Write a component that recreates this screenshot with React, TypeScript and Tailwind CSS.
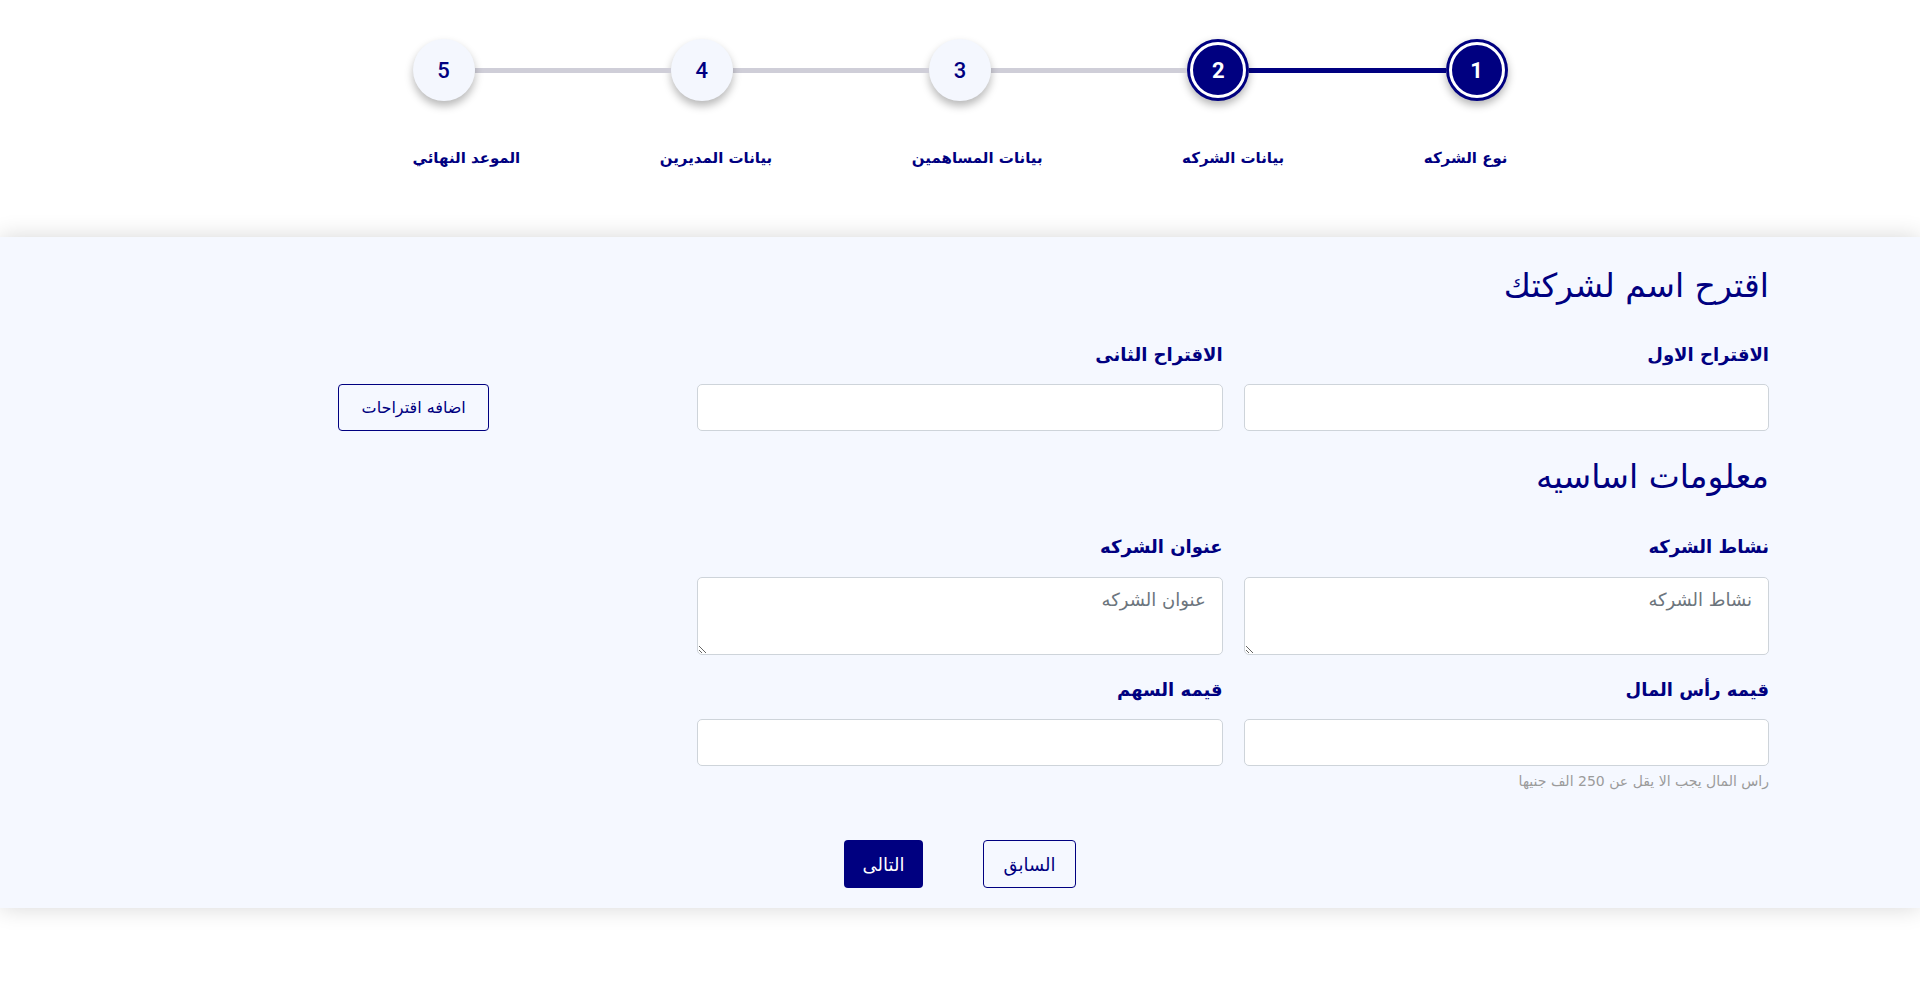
import React from "react";

const steps = [
  { n: 1, label: "نوع الشركه", done: true },
  { n: 2, label: "بيانات الشركه", done: true },
  { n: 3, label: "بيانات المساهمين", done: false },
  { n: 4, label: "بيانات المديرين", done: false },
  { n: 5, label: "الموعد النهائي", done: false },
];

function StepCircle({ n, done }: { n: number; done: boolean }) {
  if (done) {
    return (
      <div className="w-[62px] h-[62px] shrink-0 rounded-full bg-[#000080] flex items-center justify-center shadow-[0_4px_8px_rgba(0,0,0,0.3)]">
        <div className="w-[56px] h-[56px] rounded-full border-[3px] border-white bg-[#000080] flex items-center justify-center text-white text-[22px] font-bold font-['Roboto',sans-serif]">
          {n}
        </div>
      </div>
    );
  }
  return (
    <div className="w-[62px] h-[62px] shrink-0 rounded-full bg-[#f4f7fe] flex items-center justify-center text-[#000080] text-[22px] font-medium font-['Roboto',sans-serif] shadow-[0_5px_8px_rgba(0,0,0,0.28)]">
      {n}
    </div>
  );
}

function Stepper() {
  return (
    <div className="pt-[39px] pb-[67px]">
      <div className="w-[1095px] mx-auto flex items-center">
        {steps.map((s, i) => (
          <React.Fragment key={s.n}>
            <StepCircle n={s.n} done={s.done} />
            {i < steps.length - 1 && (
              <div className={`flex-1 h-[5px] ${steps[i + 1].done ? "bg-[#000080]" : "bg-[#cfced8]"}`} />
            )}
          </React.Fragment>
        ))}
      </div>
      <div className="w-[1095px] mx-auto flex justify-between mt-[45px]">
        {steps.map((s) => (
          <span key={s.n} className="text-[15px] leading-[24px] font-bold text-[#000080]">
            {s.label}
          </span>
        ))}
      </div>
    </div>
  );
}

function Field({ label, area, placeholder, help }: { label: string; area?: boolean; placeholder?: string; help?: string }) {
  return (
    <div className="flex flex-col">
      <label className="text-[18px] leading-[24px] font-bold text-[#000080]">{label}</label>
      {area ? (
        <textarea
          placeholder={placeholder}
          className="mt-[18px] h-[78px] w-full bg-white border border-[#ced4da] rounded-[5px] px-[16px] py-[8px] text-[18px] text-[#333] placeholder:text-[#6c757d] outline-none"
        />
      ) : (
        <input className="mt-[17px] h-[47px] w-full bg-white border border-[#ced4da] rounded-[5px] px-[16px] text-[18px] outline-none" />
      )}
      {help && <p className="mt-[6px] text-[14px] leading-[18px] text-[#9b9b9b]">{help}</p>}
    </div>
  );
}

export default function App() {
  return (
    <div dir="rtl" className="min-h-screen bg-white font-['DejaVu_Sans','Noto_Sans',sans-serif]">
      <Stepper />

      <section className="bg-[#f5f8ff] shadow-[0_0_22px_rgba(0,0,0,0.16)] pt-[29px] pb-[20px]">
        <div className="w-[1618px] mx-auto">
          <h2 className="text-[33px] leading-[40px] font-normal text-[#000080]">اقترح اسم لشركتك</h2>

          <div className="grid grid-cols-3 gap-x-[21px] mt-[37px]">
            <Field label="الاقتراح الاول" />
            <Field label="الاقتراح الثانى" />
            <div className="flex items-end justify-center">
              <button className="h-[47px] w-[151px] border border-[#000080] rounded-[4px] text-[#000080] text-[16px]">
                اضافه اقتراحات
              </button>
            </div>
          </div>

          <h2 className="mt-[26px] text-[33px] leading-[40px] font-normal text-[#000080]">معلومات اساسيه</h2>

          <div className="grid grid-cols-3 gap-x-[21px] mt-[38px]">
            <Field label="نشاط الشركه" area placeholder="نشاط الشركه" />
            <Field label="عنوان الشركه" area placeholder="عنوان الشركه" />
            <div />
          </div>

          <div className="grid grid-cols-3 gap-x-[21px] mt-[23px]">
            <Field label="قيمه رأس المال" help="راس المال يجب الا يقل عن 250 الف جنيها" />
            <Field label="قيمه السهم" />
            <div />
          </div>

          <div className="flex justify-center gap-[60px] mt-[50px]">
            <button className="h-[48px] w-[93px] border border-[#000080] rounded-[4px] text-[#000080] text-[18px]">
              السابق
            </button>
            <button className="h-[48px] w-[79px] bg-[#000080] rounded-[4px] text-white text-[18px]">
              التالى
            </button>
          </div>
        </div>
      </section>
    </div>
  );
}
